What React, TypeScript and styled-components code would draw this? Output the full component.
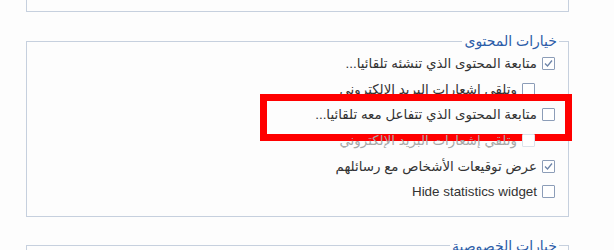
import React from 'react';
import styled, { createGlobalStyle } from 'styled-components';

const GlobalStyle = createGlobalStyle`
  body {
    margin: 0;
    background: #fdfdfd;
    font-family: "Liberation Sans", "DejaVu Sans", sans-serif;
  }
`;

type Option = {
  label: string;
  checked?: boolean;
  nested?: boolean;
  disabled?: boolean;
  marked?: boolean;
};

const contentOptions: Option[] = [
  { label: 'متابعة المحتوى الذي تنشئه تلقائيا...', checked: true },
  { label: 'وتلقي إشعارات البريد الإلكتروني', nested: true },
  { label: 'متابعة المحتوى الذي تتفاعل معه تلقائيا...', marked: true },
  { label: 'وتلقي إشعارات البريد الإلكتروني', nested: true, disabled: true },
  { label: 'عرض توقيعات الأشخاص مع رسائلهم', checked: true },
  { label: 'Hide statistics widget' },
];

const CheckBox: React.FC<{ checked?: boolean; disabled?: boolean }> = ({ checked, disabled }) => (
  <Box $disabled={disabled}>
    {checked && (
      <svg width="11" height="11" viewBox="0 0 11 11">
        <polyline points="2,5.5 4.5,8 9,2.5" fill="none" stroke="#6d84a8" strokeWidth="1.3" />
      </svg>
    )}
  </Box>
);

const App: React.FC = () => {
  return (
    <>
      <GlobalStyle />
      <Page dir="rtl">
        <Section $cut>
          <Rows>
            <Row>
              <Label>&nbsp;</Label>
            </Row>
          </Rows>
        </Section>

        <Section>
          <Legend>خيارات المحتوى</Legend>
          <Rows>
            {contentOptions.map((o, i) => (
              <Row key={i} $nested={o.nested}>
                <CheckBox checked={o.checked} disabled={o.disabled} />
                <Label $disabled={o.disabled}>{o.label}</Label>
                {o.marked && <Highlight />}
              </Row>
            ))}
          </Rows>
        </Section>

        <Section>
          <Legend>خيارات الخصوصية</Legend>
          <Rows>
            <Row>
              <Label>&nbsp;</Label>
            </Row>
          </Rows>
        </Section>
      </Page>
    </>
  );
};

const Page = styled.div`
  width: 543px;
  margin-left: 26px;
  display: flex;
  flex-direction: column;
  gap: 21px;
`;

const Section = styled.fieldset<{ $cut?: boolean }>`
  margin: 0;
  padding: 0 0 11px;
  min-width: 0;
  border: 1px solid #c6d0de;
  ${p => p.$cut && 'margin-top: -60px; height: 72px; box-sizing: border-box;'}
`;

const Legend = styled.legend`
  margin-right: 9px;
  padding: 0 2px;
  font-size: 14px;
  line-height: 16px;
  color: #2b5ca8;
`;

const Rows = styled.div`
  display: flex;
  flex-direction: column;
  padding-top: 2px;
`;

const Row = styled.div<{ $nested?: boolean }>`
  position: relative;
  height: 25.6px;
  display: flex;
  align-items: center;
  gap: 5px;
  padding-right: ${p => (p.$nested ? '33px' : '13px')};
`;

const Box = styled.span<{ $disabled?: boolean }>`
  flex: none;
  width: 11px;
  height: 11px;
  border: 1px solid ${p => (p.$disabled ? '#dce2ea' : '#8c9db8')};
  border-radius: 1px;
  background: #fff;
  display: flex;
  align-items: center;
  justify-content: center;
`;

const Label = styled.span<{ $disabled?: boolean }>`
  font-size: 13.4px;
  color: ${p => (p.$disabled ? '#a8a8a8' : '#333')};
  white-space: nowrap;
`;

const Highlight = styled.span`
  position: absolute;
  left: 233px;
  top: -8px;
  width: 312px;
  height: 47px;
  box-sizing: border-box;
  border: 7px solid #ff0000;
  pointer-events: none;
`;

export default App;
